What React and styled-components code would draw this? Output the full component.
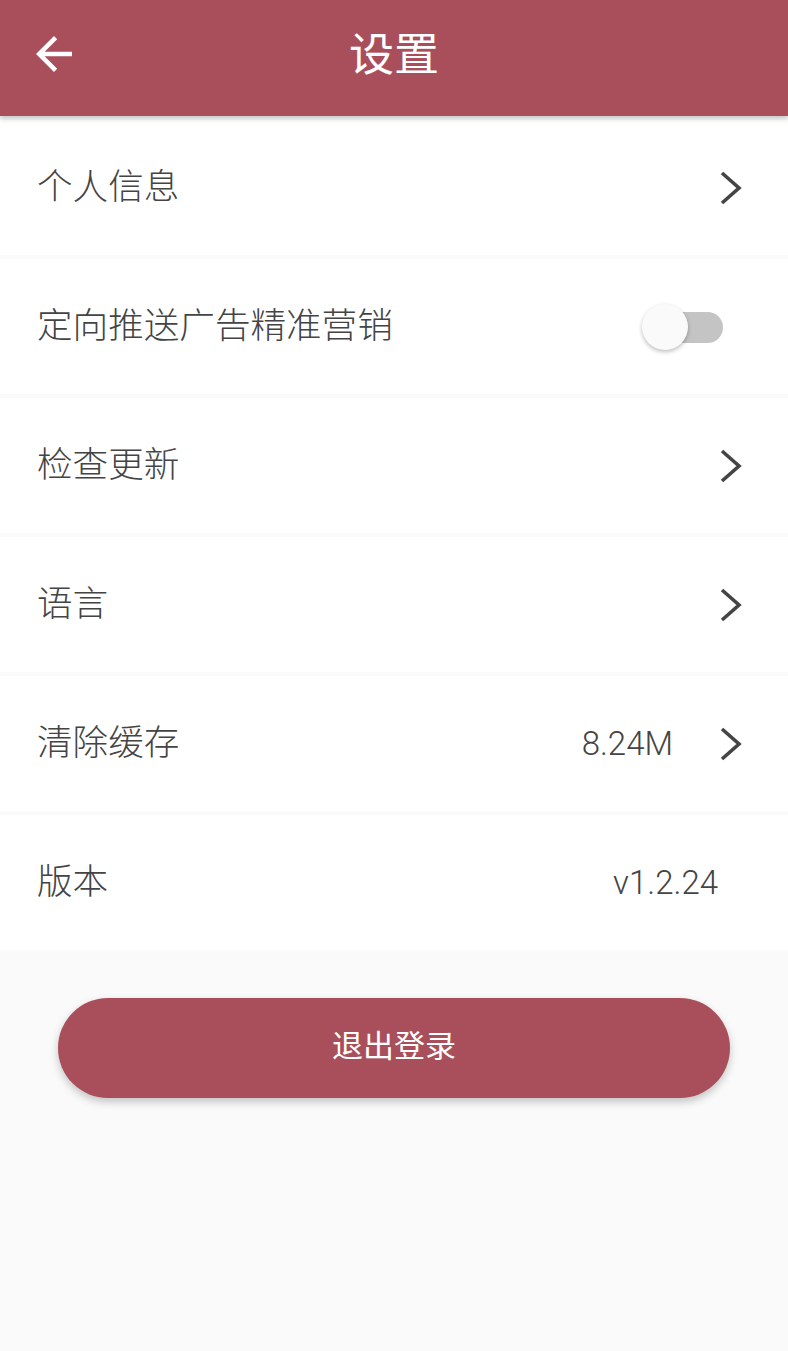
import styled, { createGlobalStyle } from 'styled-components';

const GlobalStyle = createGlobalStyle`
  html, body {
    margin: 0;
    padding: 0;
    background: #fafafa;
  }
  * {
    box-sizing: border-box;
  }
`;

const Page = styled.div`
  width: 788px;
  min-height: 1351px;
  background: #fafafa;
  font-family: Roboto, "Noto Sans CJK SC", sans-serif;
  color: #444;
`;

const Header = styled.div`
  position: relative;
  z-index: 2;
  height: 116px;
  background: #a94f5b;
  display: flex;
  align-items: center;
  justify-content: center;
  box-shadow: 0 2px 6px rgba(0, 0, 0, 0.25);
`;

const BackButton = styled.div`
  position: absolute;
  left: 27px;
  top: 27px;
  width: 54px;
  height: 54px;
  display: flex;
`;

const Title = styled.h1`
  margin: 0;
  color: #fff;
  font-size: 45px;
  font-weight: 400;
  line-height: 1;
  margin-top: -6px;
`;

const List = styled.div`
  display: flex;
  flex-direction: column;
  gap: 4px;
  padding-top: 4px;
`;

const Row = styled.div`
  height: 135px;
  background: #fff;
  display: flex;
  align-items: center;
  padding: 0 ${p => p.$padRight}px 0 37px;
`;

const Label = styled.span`
  flex: 1;
  font-size: 35.6px;
  font-weight: 300;
  line-height: 1;
  color: #444;
`;

const Value = styled.span`
  font-size: 33px;
  font-weight: 300;
  color: #444;
  margin-right: ${p => p.$gap}px;
`;

const Switch = styled.div`
  position: relative;
  width: 81px;
  height: 46px;
  margin-right: 27px;
`;

const Track = styled.div`
  position: absolute;
  left: 24px;
  top: 8px;
  width: 57px;
  height: 31px;
  border-radius: 16px;
  background: #c4c4c4;
`;

const Thumb = styled.div`
  position: absolute;
  left: 0;
  top: 0;
  width: 46px;
  height: 46px;
  border-radius: 50%;
  background: #fafafa;
  box-shadow: 0 2px 4px rgba(0, 0, 0, 0.25);
`;

const ButtonWrap = styled.div`
  display: flex;
  justify-content: center;
  padding-top: 48px;
`;

const LogoutButton = styled.button`
  width: 672px;
  height: 100px;
  border: none;
  border-radius: 50px;
  background: #a94f5b;
  color: #fff;
  font-family: Roboto, "Noto Sans CJK SC", sans-serif;
  font-size: 31px;
  line-height: 1;
  padding: 0 0 3px;
  box-shadow: 0 4px 8px rgba(0, 0, 0, 0.22);
`;

const Chevron = () => (
  <svg width="24" height="36" viewBox="0 0 24 36">
    <polyline points="3,3 20,18 3,33" fill="none" stroke="#444" strokeWidth="3.6" />
  </svg>
);

const BackArrow = () => (
  <svg width="54" height="54" viewBox="0 0 24 24">
    <path fill="#fff" d="M20 11H7.83l5.59-5.59L12 4l-8 8 8 8 1.41-1.41L7.83 13H20v-2z" />
  </svg>
);

const rows = [
  { label: '个人信息', type: 'link' },
  { label: '定向推送广告精准营销', type: 'switch' },
  { label: '检查更新', type: 'link' },
  { label: '语言', type: 'link' },
  { label: '清除缓存', type: 'link', value: '8.24M' },
  { label: '版本', type: 'text', value: 'v1.2.24' },
];

const App = () => {
  return (
    <Page>
      <GlobalStyle />
      <Header>
        <BackButton>
          <BackArrow />
        </BackButton>
        <Title>设置</Title>
      </Header>
      <List>
        {rows.map(row => (
          <Row key={row.label} $padRight={row.type === 'text' ? 70 : row.type === 'switch' ? 38 : 45}>
            <Label>{row.label}</Label>
            {row.value && <Value $gap={row.type === 'link' ? 46 : 0}>{row.value}</Value>}
            {row.type === 'link' && <Chevron />}
            {row.type === 'switch' && (
              <Switch>
                <Track />
                <Thumb />
              </Switch>
            )}
          </Row>
        ))}
      </List>
      <ButtonWrap>
        <LogoutButton>退出登录</LogoutButton>
      </ButtonWrap>
    </Page>
  );
};

export default App;
